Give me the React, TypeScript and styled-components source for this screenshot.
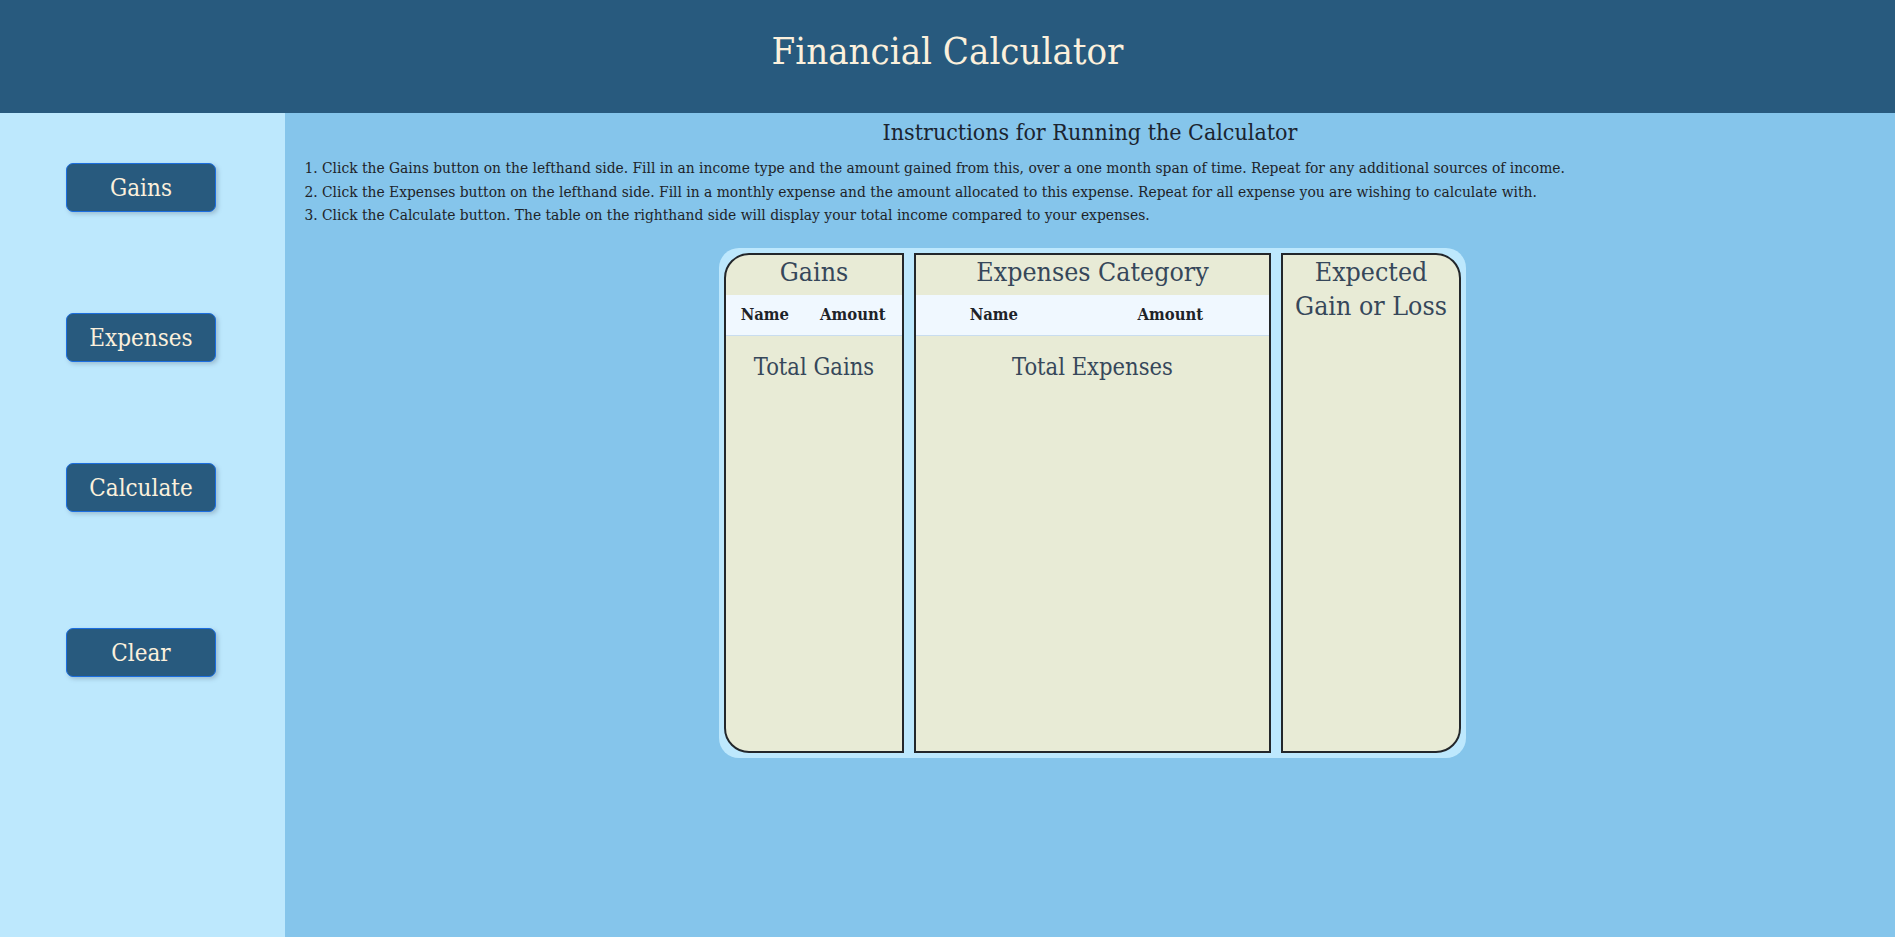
import styled, { createGlobalStyle } from "styled-components";

const GlobalStyle = createGlobalStyle`
  html, body {
    margin: 0;
    padding: 0;
  }
  body {
    font-family: "DejaVu Serif Condensed", "DejaVu Serif", "Liberation Serif", serif;
    font-stretch: condensed;
  }
`;

const sideButtons = [
  { label: "Gains", gap: 101 },
  { label: "Expenses", gap: 101 },
  { label: "Calculate", gap: 116 },
  { label: "Clear", gap: 0 },
];

const steps = [
  "Click the Gains button on the lefthand side. Fill in an income type and the amount gained from this, over a one month span of time. Repeat for any additional sources of income.",
  "Click the Expenses button on the lefthand side. Fill in a monthly expense and the amount allocated to this expense. Repeat for all expense you are wishing to calculate with.",
  "Click the Calculate button. The table on the righthand side will display your total income compared to your expenses.",
];

export default function App() {
  return (
    <Page>
      <GlobalStyle />
      <Header>
        <Title>Financial Calculator</Title>
      </Header>
      <Body>
        <Sidebar>
          {sideButtons.map(b => (
            <SideButton key={b.label} $gap={b.gap}>{b.label}</SideButton>
          ))}
        </Sidebar>
        <Main>
          <Heading>Instructions for Running the Calculator</Heading>
          <Steps>
            {steps.map(s => <li key={s}>{s}</li>)}
          </Steps>
          <Board>
            <Panel $width={180} $side="left">
              <PanelTitle>Gains</PanelTitle>
              <ColumnTable>
                <thead>
                  <tr>
                    <th>Name</th>
                    <th>Amount</th>
                  </tr>
                </thead>
              </ColumnTable>
              <Total>Total Gains</Total>
            </Panel>
            <Panel $width={357}>
              <PanelTitle>Expenses Category</PanelTitle>
              <ColumnTable>
                <thead>
                  <tr>
                    <th>Name</th>
                    <th>Amount</th>
                  </tr>
                </thead>
              </ColumnTable>
              <Total>Total Expenses</Total>
            </Panel>
            <Panel $width={180} $side="right">
              <PanelTitle>Expected Gain or Loss</PanelTitle>
            </Panel>
          </Board>
        </Main>
      </Body>
    </Page>
  );
}

const Page = styled.div`
  min-height: 100vh;
  display: flex;
  flex-direction: column;
`;

const Header = styled.header`
  height: 113px;
  flex-shrink: 0;
  background: #285a7e;
  display: flex;
  align-items: center;
  justify-content: center;
`;

const Title = styled.h1`
  margin: 0 0 12px;
  font-size: 38px;
  font-weight: normal;
  color: #fbf0dc;
`;

const Body = styled.div`
  flex: 1;
  display: flex;
`;

const Sidebar = styled.nav`
  width: 285px;
  flex-shrink: 0;
  background: #bde8fd;
  display: flex;
  flex-direction: column;
  align-items: flex-start;
  padding: 50px 0 0 66px;
  box-sizing: border-box;
`;

const SideButton = styled.button<{ $gap: number }>`
  width: 150px;
  height: 49px;
  margin-bottom: ${p => p.$gap}px;
  background: #285a7e;
  color: #fbf0dc;
  border: 1px solid #1b6ee0;
  border-radius: 7px;
  box-shadow: 2px 2px 4px rgba(90, 110, 130, 0.35);
  font-family: inherit;
  font-size: 24px;
  cursor: pointer;
`;

const Main = styled.main`
  flex: 1;
  background: #85c5eb;
  display: flex;
  flex-direction: column;
  align-items: center;
  padding-bottom: 40px;
`;

const Heading = styled.h2`
  margin: 4px 0 0;
  font-size: 23px;
  line-height: 31px;
  font-weight: normal;
  color: #1b2430;
`;

const Steps = styled.ol`
  align-self: stretch;
  margin: 9px 0 0;
  padding-left: 37px;
  font-size: 15.4px;
  line-height: 23.5px;
  color: #1e2328;
`;

const Board = styled.section`
  margin: 20px 0 0 5px;
  display: flex;
  gap: 10px;
  padding: 5px;
  background: #bde8fd;
  border-radius: 20px;
`;

const Panel = styled.div<{ $width: number; $side?: "left" | "right" }>`
  width: ${p => p.$width}px;
  height: 500px;
  box-sizing: border-box;
  border: 2px solid #23272b;
  border-radius: ${p =>
    p.$side === "left" ? "25px 0 0 25px" : p.$side === "right" ? "0 25px 25px 0" : "0"};
  background: #e8ebd6;
  display: flex;
  flex-direction: column;
  overflow: hidden;
`;

const PanelTitle = styled.div`
  padding: 0 6px 6px;
  font-size: 26.5px;
  line-height: 34px;
  text-align: center;
  color: #36475a;
`;

const ColumnTable = styled.table`
  width: 100%;
  border-collapse: collapse;
  background: #f0f8ff;
  border-bottom: 1px solid #c9ddef;

  th {
    height: 40px;
    padding: 0 8px;
    font-size: 16.5px;
    font-weight: bold;
    color: #1e2328;
  }
`;

const Total = styled.div`
  margin-top: 16px;
  font-size: 23.5px;
  line-height: 30px;
  text-align: center;
  color: #36475a;
`;
